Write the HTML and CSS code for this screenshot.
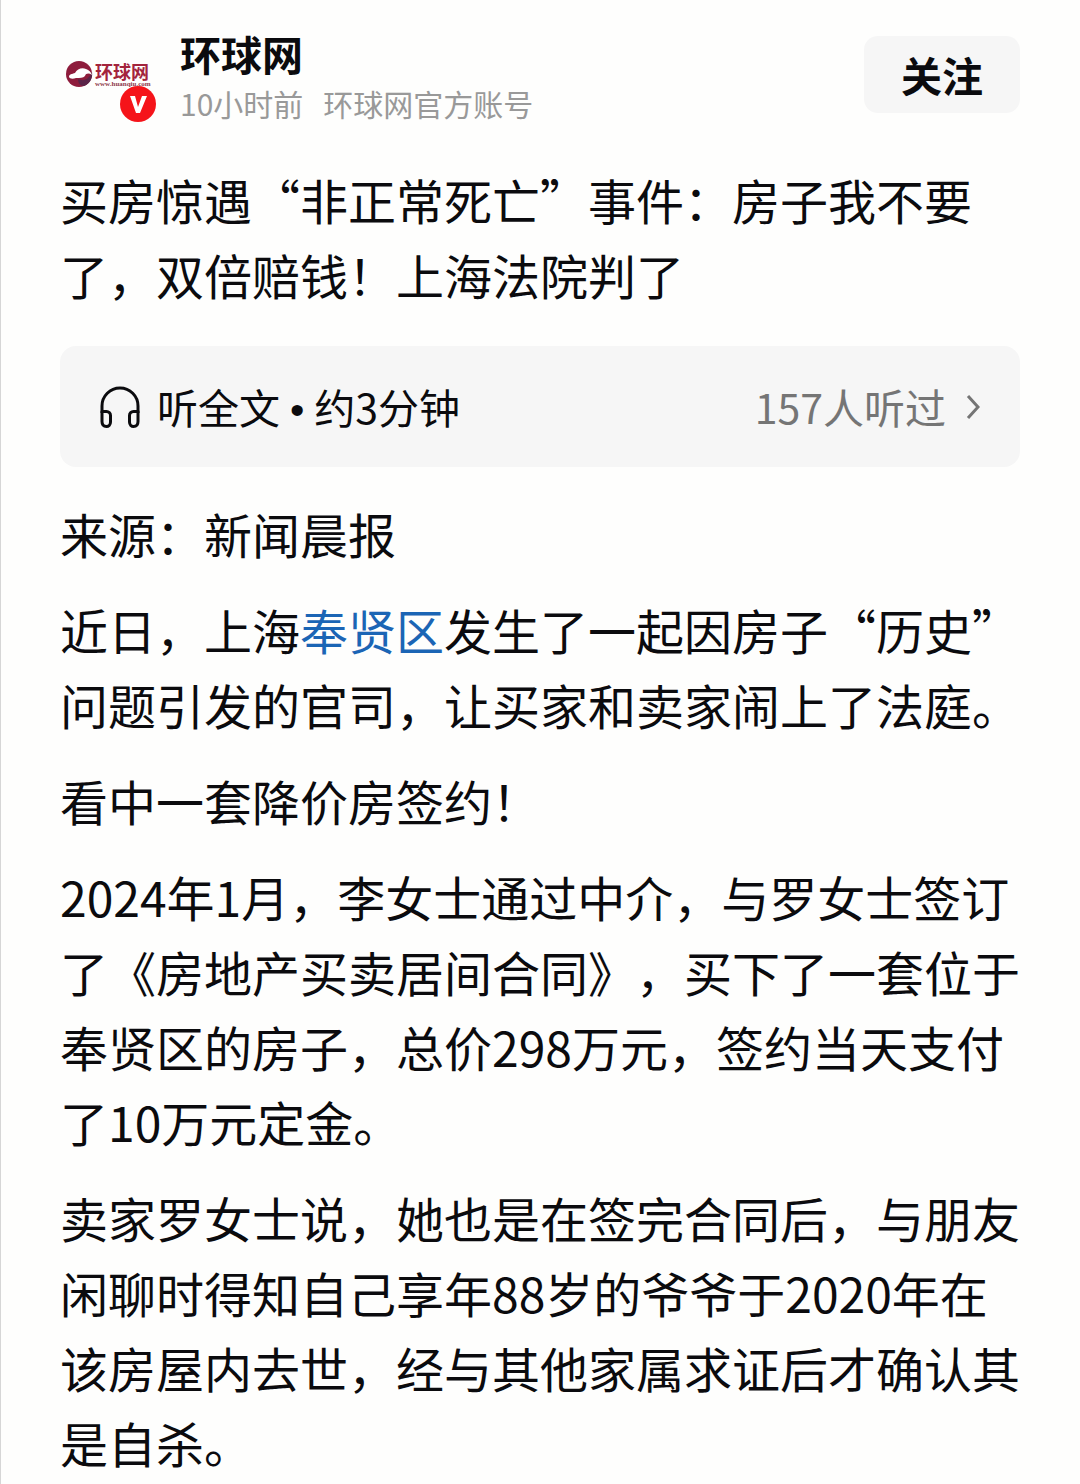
FILE: index.html
```html
<!DOCTYPE html>
<html lang="zh-CN">
<head>
  <meta charset="UTF-8" />
  <meta name="viewport" content="width=device-width, initial-scale=1" />
  <title>环球网</title>
  <link rel="stylesheet" href="styles.css">
</head>
<body>
  <header class="author">
    <a class="avatar" href="#" aria-label="环球网">
      <svg class="logo" viewBox="0 0 90 30" aria-hidden="true">
        <circle cx="19" cy="14" r="13" fill="#8e1c3c" />
        <path d="M18 19c6 3 11 0 14-7 1 6-2 12-8 14-4 0-6-3-6-7z" fill="#5a2448" />
        <path d="M9 17c0-3 3-3 6-4 2-4 7-6 11-4 3 1 5 3 6 6-3-2-6-2-7 1-2 2-5 2-9 2-3 1-6 1-7-1z" fill="#fff" />
        <text class="logo-name" x="35" y="19">环球网</text>
        <text class="logo-url" x="35" y="26">www.huanqiu.com</text>
      </svg>
      <svg class="badge" viewBox="0 0 36 36" aria-hidden="true">
        <circle cx="18" cy="18" r="18" fill="#f5141a" />
        <path d="M10 10h5l3 11 4-11h5l-7 17h-4z" fill="#fff" />
      </svg>
    </a>
    <div class="author-info">
      <a class="author-name" href="#">环球网</a>
      <p class="author-meta"><span>10小时前</span><span>环球网官方账号</span></p>
    </div>
    <button class="follow" type="button">关注</button>
  </header>

  <main>
    <h1>买房惊遇“非正常死亡”事件：房子我不要了，双倍赔钱！上海法院判了</h1>

    <button class="listen" type="button">
      <svg class="headphones" viewBox="0 0 40 42" fill="none" stroke="currentColor" stroke-width="3"
        stroke-linejoin="round" aria-hidden="true">
        <path d="M2 27V20a18 18 0 0 1 36 0V27" />
        <path d="M2 25.500h4.500a4 4 0 0 1 4 4V36c0 3-2 4.500-4 4.500-3 0-4.500-2-4.500-5z" />
        <path d="M38 25.500h-4.500a4 4 0 0 0-4 4V36c0 3 2 4.500 4 4.500 3 0 4.500-2 4.500-5z" />
      </svg>
      <span>听全文<span class="dot">•</span>约3分钟</span>
      <span class="count">157人听过</span>
      <svg class="arrow" viewBox="0 0 14 26" fill="none" stroke="currentColor" stroke-width="3" aria-hidden="true">
        <path d="M2 2l10 11-10 11" />
      </svg>
    </button>

    <article>
      <p>来源：新闻晨报</p>
      <p>近日，上海<a href="#">奉贤区</a>发生了一起因房子“历史”<wbr>问题引发的官司，让买家和卖家闹上了法庭。</p>
      <p>看中一套降价房签约！</p>
      <p>2024年1月，李女士通过中介，与罗女士签订了《房地产买卖居间合同》，买下了一套位于奉贤区的房子，总价298万元，签约当天支付了10万元定金。</p>
      <p>卖家罗女士说，她也是在签完合同后，与朋友闲聊时得知自己享年88岁的爷爷于2020年在该房屋内去世，经与其他家属求证后才确认其是自杀。</p>
    </article>
  </main>
</body>
</html>
```

FILE: styles.css
```css
:root {
  --bg: #fefefd;
  --panel: #f6f6f6;
  --text: #0b0b0e;
  --muted: #999;
  --link: #1b65b5;
}
* {
  margin: 0;
  padding: 0;
  box-sizing: border-box;
}
body {
  font-family: "Noto Sans CJK SC", sans-serif;
  background-color: var(--bg);
  color: var(--text);
  min-height: 100vh;
  padding: 27px 59px 0 59px;
  border-left: 1px solid #d6d6d6;
  border-right: 1px solid var(--bg);
  text-spacing-trim: space-all;
}
a {
  color: var(--link);
  text-decoration: none;
}
button {
  font-family: inherit;
  color: inherit;
  border: none;
  background-color: var(--panel);
  cursor: pointer;
}
.author {
  display: flex;
  align-items: flex-start;
}
.avatar {
  position: relative;
  width: 96px;
  height: 95px;
  padding-top: 33px;
  margin-right: 24px;
}
.logo {
  display: block;
  width: 90px;
  height: 30px;
  overflow: visible;
}
.logo-name {
  font-size: 18px;
  font-weight: 700;
  fill: #a3243c;
}
.logo-url {
  font-family: "Liberation Serif", serif;
  font-size: 7px;
  font-weight: bold;
  fill: #8e3a4c;
}
.badge {
  position: absolute;
  right: 0;
  bottom: 0;
  width: 36px;
  height: 36px;
}
.author-info {
  flex: 1;
}
.author-name {
  display: block;
  font-size: 41px;
  font-weight: 700;
  line-height: 52px;
  color: var(--text);
}
.author-meta {
  display: flex;
  gap: 20px;
  font-size: 30px;
  line-height: 48px;
  color: var(--muted);
}
.follow {
  margin-top: 9px;
  padding: 0 37px;
  font-size: 41px;
  font-weight: 700;
  line-height: 77px;
  border-radius: 14px;
}
h1,
article p {
  font-size: 48px;
  font-weight: 400;
  line-height: 75px;
}
h1 {
  margin: 35px 0 34px;
}
.listen {
  display: flex;
  align-items: center;
  width: 100%;
  padding: 0 40px;
  font-size: 41px;
  line-height: 121px;
  border-radius: 16px;
}
.headphones {
  width: 40px;
  height: 42px;
  margin-right: 17px;
}
.dot {
  margin: 0 10px;
  font-family: "Liberation Sans", sans-serif;
  line-height: 1;
}
.count {
  margin-left: auto;
  color: #757575;
}
.arrow {
  width: 14px;
  height: 26px;
  margin-left: 20px;
  color: #757575;
}
article {
  display: flex;
  flex-direction: column;
  gap: 21px;
  margin: 29px -8px 0 0;
}
```
